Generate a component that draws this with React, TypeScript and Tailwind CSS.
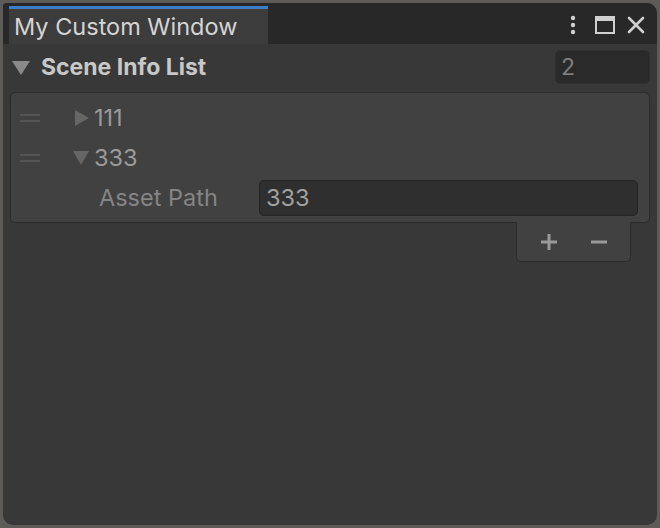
import React from 'react';

export default function App() {
  return (
    <div className="w-[660px] h-[528px] bg-[#5d5b58] p-[3px]" style={{ fontFamily: 'Inter, "Noto Sans", sans-serif' }}>
      <div className="w-full h-full rounded-[10px] rounded-tl-[4px] bg-[#383838] overflow-hidden flex flex-col">
        {/* Title bar */}
        <div className="h-[41px] bg-[#282828] flex items-end justify-between shrink-0">
          <div className="ml-[6px] w-[259px] h-[38px] bg-[#3c3c3c] border-t-[3px] border-[#3d7ec6] flex items-center pl-[5px]">
            <span className="text-[23.5px] text-[#d4d4d4] leading-none">My Custom Window</span>
          </div>
          <div className="flex items-center self-center pr-[11px] pt-[3px]">
            <svg width="6" height="20" viewBox="0 0 6 20" className="mr-[18px]">
              <circle cx="3" cy="3" r="2.2" fill="#d0d0d0" />
              <circle cx="3" cy="10" r="2.2" fill="#d0d0d0" />
              <circle cx="3" cy="17" r="2.2" fill="#d0d0d0" />
            </svg>
            <svg width="22" height="20" viewBox="0 0 22 20" className="mr-[10px]">
              <rect x="2" y="2" width="18" height="16" fill="none" stroke="#d0d0d0" strokeWidth="2" />
              <rect x="2" y="2" width="18" height="4" fill="#d0d0d0" />
            </svg>
            <svg width="20" height="20" viewBox="0 0 20 20">
              <path d="M3 3 L17 17 M17 3 L3 17" stroke="#d0d0d0" strokeWidth="2.6" strokeLinecap="round" />
            </svg>
          </div>
        </div>

        {/* Body */}
        <div className="flex-1 px-[7px] pt-[6px]">
          <div className="flex items-center h-[34px]">
            <svg width="20" height="16" viewBox="0 0 20 16" className="ml-[1px] mr-[10px]">
              <path d="M1 2 L19 2 L10 16 Z" fill="#8a8a8a" />
            </svg>
            <span className="text-[23px] font-bold text-[#c8c8c8] leading-none">Scene Info List</span>
            <div className="ml-auto w-[95px] h-[34px] rounded-[5px] bg-[#2a2a2a] border border-[#2f2f2f] flex items-center pl-[5px]">
              <span className="text-[23px] text-[#7e7e7e] leading-none">2</span>
            </div>
          </div>

          {/* List */}
          <div className="mt-[8px] rounded-[5px] bg-[#414141] border border-[#2b2b2b] pt-[5px] pb-[4px] pl-[9px] pr-[11px]">
            <div className="flex items-center h-[40px]">
              <svg width="22" height="10" viewBox="0 0 22 10" className="mr-[32px]">
                <rect x="0" y="1" width="20" height="2" fill="#555555" />
                <rect x="0" y="7" width="20" height="2" fill="#555555" />
              </svg>
              <svg width="16" height="18" viewBox="0 0 16 18" className="mr-[4px]">
                <path d="M1 1 L15 9 L1 17 Z" fill="#666666" />
              </svg>
              <span className="text-[23.5px] text-[#9a9a9a] leading-none">111</span>
            </div>
            <div className="flex items-center h-[40px]">
              <svg width="22" height="10" viewBox="0 0 22 10" className="mr-[30px]">
                <rect x="0" y="1" width="20" height="2" fill="#555555" />
                <rect x="0" y="7" width="20" height="2" fill="#555555" />
              </svg>
              <svg width="18" height="16" viewBox="0 0 18 16" className="mr-[4px]">
                <path d="M1 1 L17 1 L9 15 Z" fill="#666666" />
              </svg>
              <span className="text-[23.5px] text-[#9a9a9a] leading-none">333</span>
            </div>
            <div className="flex items-center h-[40px]">
              <span className="ml-[79px] w-[160px] text-[23.5px] text-[#858585] leading-none">Asset Path</span>
              <div className="flex-1 h-[36px] rounded-[5px] bg-[#2f2f2f] border border-[#242424] flex items-center pl-[6px]">
                <span className="text-[23.5px] text-[#a0a0a0] leading-none">333</span>
              </div>
            </div>
          </div>

          {/* Footer +/- */}
          <div className="flex justify-end pr-[19px]">
            <div className="w-[115px] h-[40px] -mt-px rounded-b-[5px] bg-[#414141] border border-t-0 border-[#2b2b2b] flex items-center justify-center gap-[30px]">
              <svg width="20" height="20" viewBox="0 0 20 20">
                <path d="M10 2 L10 18 M2 10 L18 10" stroke="#9a9a9a" strokeWidth="3" />
              </svg>
              <svg width="20" height="20" viewBox="0 0 20 20">
                <path d="M2 10 L18 10" stroke="#9a9a9a" strokeWidth="3" />
              </svg>
            </div>
          </div>
        </div>
      </div>
    </div>
  );
}
